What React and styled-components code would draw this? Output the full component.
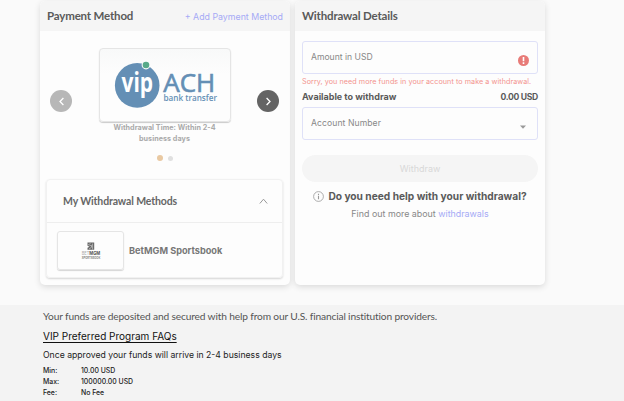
import React, { useState } from 'react';
import styled, { createGlobalStyle } from 'styled-components';

const GlobalStyle = createGlobalStyle`
  * {
    box-sizing: border-box;
  }

  body {
    margin: 0;
    background: #fafafa;
    color: #5a5a5a;
    font-family: Inter, 'Open Sans', sans-serif;
    overflow: hidden;
  }

  h1, h2, h3, p, dl, dd {
    margin: 0;
  }

  button {
    font-family: inherit;
    padding: 0;
    border: none;
    background: none;
  }
`;

const Page = styled.div`
  height: 401px;
  display: flex;
  flex-direction: column;
`;

const Panels = styled.main`
  display: flex;
  gap: 5px;
  height: 305px;
  padding: 1px 0 20px 40px;
`;

const Card = styled.section`
  width: 250px;
  height: 284px;
  border-radius: 5px;
  background: #fdfdfd;
  box-shadow: 0 2px 6px rgba(0, 0, 0, 0.13);
`;

const CardHeader = styled.header`
  display: flex;
  align-items: center;
  justify-content: space-between;
  height: 30px;
  padding: 0 7px;
  border-radius: 5px 5px 0 0;
  background: #f5f5f5;
`;

const CardTitle = styled.h2`
  font: 700 11.5px/14px Lato, 'Noto Sans', sans-serif;
  letter-spacing: -0.17px;
  white-space: nowrap;
`;

const Link = styled.a`
  color: #a5aaf6;
  font-size: ${(props) => props.$size || '8.8px'};
  white-space: nowrap;
`;

const Carousel = styled.div`
  display: flex;
  justify-content: space-between;
  height: 148px;
  padding: 17px 11px 0 10px;
`;

const ArrowButton = styled.button`
  display: flex;
  align-items: center;
  justify-content: center;
  width: 22px;
  height: 22px;
  margin-top: 42px;
  border-radius: 50%;
  background: ${(props) => (props.$muted ? '#b7b7b7' : '#646464')};
`;

const Slide = styled.div`
  display: flex;
  flex-direction: column;
  align-items: center;
  width: 132px;
`;

const LogoCard = styled.div`
  width: 132px;
  height: 74px;
  border: 1px solid #e5e5e5;
  border-radius: 4px;
  background: linear-gradient(#f8f9f9, #fdfdfd 35%);
  box-shadow: 0 1px 1px rgba(0, 0, 0, 0.2);
`;

const SlideCaption = styled.p`
  padding-top: 1px;
  color: #aaa;
  font-size: 7.2px;
  font-weight: 700;
  line-height: 10.5px;
  letter-spacing: 0.04px;
  text-align: center;
  white-space: nowrap;
`;

const Dots = styled.div`
  display: flex;
  align-items: center;
  gap: 5px;
  margin-top: 11px;
`;

const Dot = styled.span`
  width: ${(props) => (props.$active ? '6px' : '5px')};
  height: ${(props) => (props.$active ? '6px' : '5px')};
  margin-top: ${(props) => (props.$active ? '0' : '1px')};
  border-radius: 50%;
  background: ${(props) => (props.$active ? '#e9c9a2' : '#e0e0e0')};
`;

const Accordion = styled.div`
  height: 99px;
  margin: 0 7px 0 6px;
  border: 1px solid #f1f1f1;
  border-radius: 4px;
  box-shadow: 0 1px 2px rgba(0, 0, 0, 0.16);
`;

const AccordionHeader = styled.button`
  display: flex;
  align-items: center;
  justify-content: space-between;
  width: 100%;
  height: 43px;
  padding: 0 14px 0 16px;
  border-bottom: 1px solid #eee;
  color: #666;
`;

const AccordionTitle = styled.span`
  font: 700 10.5px/14px Lato, 'Open Sans', sans-serif;
  letter-spacing: -0.13px;
`;

const MethodRow = styled.div`
  display: flex;
  align-items: center;
  gap: 5px;
  height: 54px;
  padding-left: 10px;
`;

const MethodLogo = styled.div`
  width: 67px;
  height: 39px;
  border: 1px solid #e5e5e5;
  border-radius: 3px;
  box-shadow: 0 1px 1px rgba(0, 0, 0, 0.16);
`;

const MethodName = styled.span`
  color: #777;
  font-size: 9.2px;
  font-weight: 700;
`;

const Form = styled.form`
  display: flex;
  flex-direction: column;
  padding: 10px 7px 0;
`;

const Field = styled.div`
  display: flex;
  justify-content: space-between;
  height: 33px;
  padding: 0 8px;
  border: 1px solid #dfe1f8;
  border-radius: 3px;
`;

const FieldLabel = styled.label`
  color: #888;
  font-size: 8.6px;
  line-height: 30px;
  letter-spacing: ${(props) => props.$spacing || '0'};
`;

const FieldIcon = styled.span`
  display: flex;
  align-items: center;
  padding-top: 6px;
`;

const ErrorText = styled.p`
  height: 15px;
  color: #f3938d;
  font-size: 7.2px;
  line-height: 15px;
  letter-spacing: 0.06px;
  white-space: nowrap;
`;

const BalanceRow = styled.div`
  display: flex;
  justify-content: space-between;
  height: 18px;
  font-size: 9px;
  font-weight: 700;
  line-height: 16px;
`;

const Balance = styled.span`
  font-size: 8.6px;
  letter-spacing: -0.3px;
`;

const SubmitButton = styled.button`
  height: 27px;
  margin-top: 15px;
  border-radius: 14px;
  background: #f5f5f5;
  color: #d8d8d8;
  font-size: 9px;
`;

const Help = styled.div`
  display: flex;
  flex-direction: column;
  align-items: center;
  padding-top: 6px;
`;

const HelpTitle = styled.h3`
  display: flex;
  align-items: center;
  gap: 4px;
  font-size: 10.2px;
  line-height: 16px;
  white-space: nowrap;
`;

const HelpText = styled.p`
  padding-top: 1px;
  color: #888;
  font-size: 8.9px;
  line-height: 17px;
  white-space: nowrap;
`;

const Footer = styled.footer`
  flex: 1;
  padding: 4px 0 0 43px;
  background: #f3f3f3;
  color: #222;
`;

const FooterNote = styled.p`
  color: #555;
  font: 400 10.2px/14px Lato, 'Noto Sans', sans-serif;
  letter-spacing: -0.15px;
`;

const FaqLink = styled.p`
  padding-top: 6px;
  color: #111;
  font-size: 10px;
  line-height: 14px;
  text-decoration: underline;
  text-underline-offset: 1.5px;
`;

const ArrivalText = styled.p`
  padding-top: 5px;
  font-size: 8.67px;
  line-height: 14px;
`;

const Limits = styled.dl`
  display: grid;
  grid-template-columns: 38px auto;
  grid-auto-rows: 11px;
  padding-top: 3px;
  font-size: 6.9px;
  font-weight: 500;
  line-height: 11px;
`;

const Chevron = ({ width = 7, height = 9, d, color = '#fff', stroke = 1.3 }) => (
  <svg width={width} height={height} fill="none" stroke={color} strokeWidth={stroke}>
    <path d={d} />
  </svg>
);

const VipLogo = () => (
  <svg width="130" height="72" viewBox="100 49 130 72">
    <circle cx="137.2" cy="85.4" r="22.3" fill="#648fb5" />
    <circle cx="146" cy="65" r="4.4" fill="#fbfcfc" />
    <circle cx="146" cy="65" r="3.3" fill="#58aa89" />
    <text x="121.5" y="91.7" fill="#fff" fontFamily="Open Sans" fontWeight="700" fontSize="26.5" textLength="31.5" lengthAdjust="spacingAndGlyphs">vip</text>
    <text x="163.3" y="92" fill="#648fb5" stroke="#648fb5" strokeWidth="0.6" fontFamily="Open Sans" fontSize="25" textLength="52" lengthAdjust="spacingAndGlyphs">ACH</text>
    <text x="163.5" y="100.5" fill="#648fb5" fontFamily="Open Sans" fontWeight="600" fontSize="8.4" textLength="53.5" lengthAdjust="spacingAndGlyphs">bank transfer</text>
  </svg>
);

const BetMgmLogo = () => (
  <svg width="65" height="37" viewBox="58 232 65 37">
    <path d="M87.5 242.5h6.7v7.3h-6.7v-2l2-1-2-1z" fill="#666" />
    <path d="M88 245l2.5-1.5M89 249l2.5-1.7v-2l-2 .2M92.6 243.5v6" stroke="#ddd" strokeWidth="0.6" fill="none" />
    <text x="81.7" y="255" fill="#aaa" fontFamily="Inter" fontSize="5" textLength="7.5" lengthAdjust="spacingAndGlyphs">BET</text>
    <text x="89.3" y="255" fill="#555" fontFamily="Inter" fontWeight="700" fontSize="5" textLength="11" lengthAdjust="spacingAndGlyphs">MGM</text>
    <text x="81.7" y="259" fill="#777" fontFamily="Inter" fontWeight="600" fontSize="3.4" textLength="18.6" lengthAdjust="spacingAndGlyphs">SPORTSBOOK</text>
  </svg>
);

const AlertIcon = () => (
  <svg width="11" height="11" viewBox="0 0 11 11">
    <circle cx="5.5" cy="5.5" r="5.5" fill="#e87b78" />
    <path d="M4.7 2h1.6v4.3H4.7zM4.7 7.3h1.6v1.6H4.7z" fill="#fff" />
  </svg>
);

const InfoIcon = () => (
  <svg width="11" height="11" viewBox="0 0 11 11" fill="none" stroke="#999">
    <circle cx="5.5" cy="5.5" r="4.9" strokeWidth="0.8" />
    <path d="M5.5 2.7v1.2M5.5 4.8v3.5" strokeWidth="1.1" />
  </svg>
);

const App = () => {
  const [open, setOpen] = useState(true);

  const handleSubmit = (e) => {
    e.preventDefault();
  };

  return (
    <Page>
      <GlobalStyle />
      <Panels>
        <Card>
          <CardHeader>
            <CardTitle>Payment Method</CardTitle>
            <Link>+ Add Payment Method</Link>
          </CardHeader>
          <Carousel>
            <ArrowButton $muted>
              <Chevron d="M5.4 1L2 4.5 5.4 8" />
            </ArrowButton>
            <Slide>
              <LogoCard>
                <VipLogo />
              </LogoCard>
              <SlideCaption>
                Withdrawal Time: Within 2-4
                <br />
                business days
              </SlideCaption>
              <Dots>
                <Dot $active />
                <Dot />
              </Dots>
            </Slide>
            <ArrowButton>
              <Chevron d="M1.6 1L5 4.5 1.6 8" />
            </ArrowButton>
          </Carousel>
          <Accordion>
            <AccordionHeader onClick={() => setOpen(!open)}>
              <AccordionTitle>My Withdrawal Methods</AccordionTitle>
              <Chevron width={9} height={7} d="M0.8 5.5L4.5 1.2 8.2 5.5" color="#999" stroke={1} />
            </AccordionHeader>
            {open && (
              <MethodRow>
                <MethodLogo>
                  <BetMgmLogo />
                </MethodLogo>
                <MethodName>BetMGM Sportsbook</MethodName>
              </MethodRow>
            )}
          </Accordion>
        </Card>

        <Card>
          <CardHeader>
            <CardTitle>Withdrawal Details</CardTitle>
          </CardHeader>
          <Form onSubmit={handleSubmit}>
            <Field>
              <FieldLabel>Amount in USD</FieldLabel>
              <FieldIcon>
                <AlertIcon />
              </FieldIcon>
            </Field>
            <ErrorText>Sorry, you need more funds in your account to make a withdrawal.</ErrorText>
            <BalanceRow>
              <span>Available to withdraw</span>
              <Balance>0.00 USD</Balance>
            </BalanceRow>
            <Field>
              <FieldLabel $spacing="0.08px">Account Number</FieldLabel>
              <FieldIcon>
                <svg width="12" height="4">
                  <path d="M3 0.5h6L6 3.7z" fill="#999" />
                </svg>
              </FieldIcon>
            </Field>
            <SubmitButton type="submit" disabled>Withdraw</SubmitButton>
          </Form>
          <Help>
            <HelpTitle>
              <InfoIcon />
              <span>Do you need help with your withdrawal?</span>
            </HelpTitle>
            <HelpText>
              Find out more about <Link $size="8.9px">withdrawals</Link>
            </HelpText>
          </Help>
        </Card>
      </Panels>

      <Footer>
        <FooterNote>Your funds are deposited and secured with help from our U.S. financial institution providers.</FooterNote>
        <FaqLink>VIP Preferred Program FAQs</FaqLink>
        <ArrivalText>Once approved your funds will arrive in 2-4 business days</ArrivalText>
        <Limits>
          <dt>Min:</dt>
          <dd>10.00 USD</dd>
          <dt>Max:</dt>
          <dd>100000.00 USD</dd>
          <dt>Fee:</dt>
          <dd>No Fee</dd>
        </Limits>
      </Footer>
    </Page>
  );
};

export default App;
